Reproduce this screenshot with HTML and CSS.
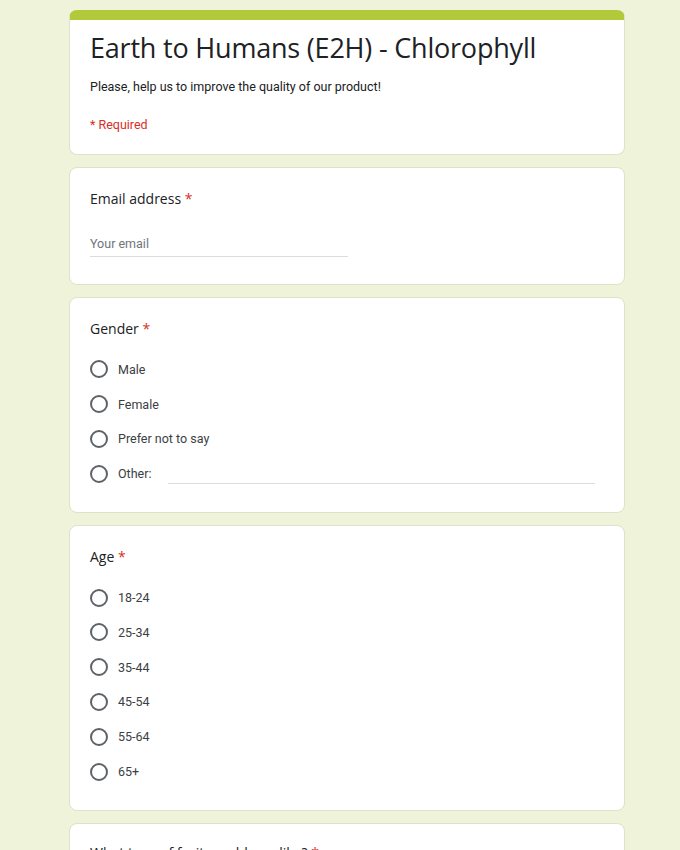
FILE: index.html
```html
<!DOCTYPE html>
<html lang="en">
<head>
<meta charset="utf-8">
<title>Earth to Humans (E2H) - Chlorophyll</title>
<link rel="stylesheet" href="styles.css">
</head>
<body>
<main class="form">
  <section class="card header-card">
    <h1 class="form-title">Earth to Humans (E2H) - Chlorophyll</h1>
    <p class="form-desc">Please, help us to improve the quality of our product!</p>
    <p class="required-note">* Required</p>
  </section>

  <section class="card question email-card">
    <div class="q-label">Email address <span class="star">*</span></div>
    <div class="text-input"><span class="placeholder">Your email</span></div>
  </section>

  <section class="card question">
    <div class="q-label">Gender <span class="star">*</span></div>
    <ul class="options">
      <li class="option"><span class="radio"></span><span class="opt-text">Male</span></li>
      <li class="option"><span class="radio"></span><span class="opt-text">Female</span></li>
      <li class="option"><span class="radio"></span><span class="opt-text">Prefer not to say</span></li>
      <li class="option"><span class="radio"></span><span class="opt-text">Other:</span><span class="other-line"></span></li>
    </ul>
  </section>

  <section class="card question">
    <div class="q-label">Age <span class="star">*</span></div>
    <ul class="options">
      <li class="option"><span class="radio"></span><span class="opt-text">18-24</span></li>
      <li class="option"><span class="radio"></span><span class="opt-text">25-34</span></li>
      <li class="option"><span class="radio"></span><span class="opt-text">35-44</span></li>
      <li class="option"><span class="radio"></span><span class="opt-text">45-54</span></li>
      <li class="option"><span class="radio"></span><span class="opt-text">55-64</span></li>
      <li class="option"><span class="radio"></span><span class="opt-text">65+</span></li>
    </ul>
  </section>

  <section class="card question last-card">
    <div class="q-label">What type of fruit would you like? <span class="star">*</span></div>
  </section>
</main>
</body>
</html>
```

FILE: styles.css
```css
* { box-sizing: border-box; }

html, body {
  margin: 0;
  padding: 0;
}

body {
  background: #eef3da;
  font-family: Roboto, "Liberation Sans", Arial, sans-serif;
  color: #202124;
  overflow: hidden;
}

.form {
  width: 556px;
  margin: 10px 0 0 69px;
  display: flex;
  flex-direction: column;
  gap: 12px;
}

.card {
  background: #ffffff;
  border: 1px solid #dde3c8;
  border-radius: 8px;
  padding: 19px 20px 21px 20px;
}

.header-card {
  border-top: 10px solid #b1c93a;
  border-radius: 8px;
  padding: 10px 20px 19px 20px;
}

.form-title {
  margin: 0;
  font-family: "Open Sans", Roboto, sans-serif;
  font-weight: 400;
  font-size: 27px;
  line-height: 36px;
  color: #202124;
  letter-spacing: -0.2px;
}

.form-desc {
  margin: 11px 0 0 0;
  font-size: 12.5px;
  line-height: 20px;
  color: #202124;
}

.required-note {
  margin: 18px 0 0 0;
  font-size: 12.5px;
  line-height: 20px;
  color: #d93025;
}

.q-label {
  font-family: "Open Sans", Roboto, sans-serif;
  font-size: 14px;
  line-height: 24px;
  color: #202124;
}

.star {
  color: #d93025;
}

.email-card {
  padding-bottom: 27px;
}

.text-input {
  width: 258px;
  margin-top: 21px;
  height: 25px;
  border-bottom: 1px solid #dadce0;
  font-size: 12.5px;
  line-height: 24px;
}

.placeholder {
  color: #70757a;
}

.options {
  list-style: none;
  margin: 11px 0 0 0;
  padding: 0;
}

.option {
  display: flex;
  align-items: center;
  height: 34.8px;
}

.radio {
  flex: none;
  width: 18px;
  height: 18px;
  border: 2px solid #5f6368;
  border-radius: 50%;
  margin-right: 10px;
}

.opt-text {
  font-size: 12.5px;
  color: #3c4043;
}

.other-line {
  flex: 1;
  height: 1px;
  background: #dadce0;
  margin: 20px 9px 0 17px;
}

.last-card {
  padding-top: 17px;
}
```
